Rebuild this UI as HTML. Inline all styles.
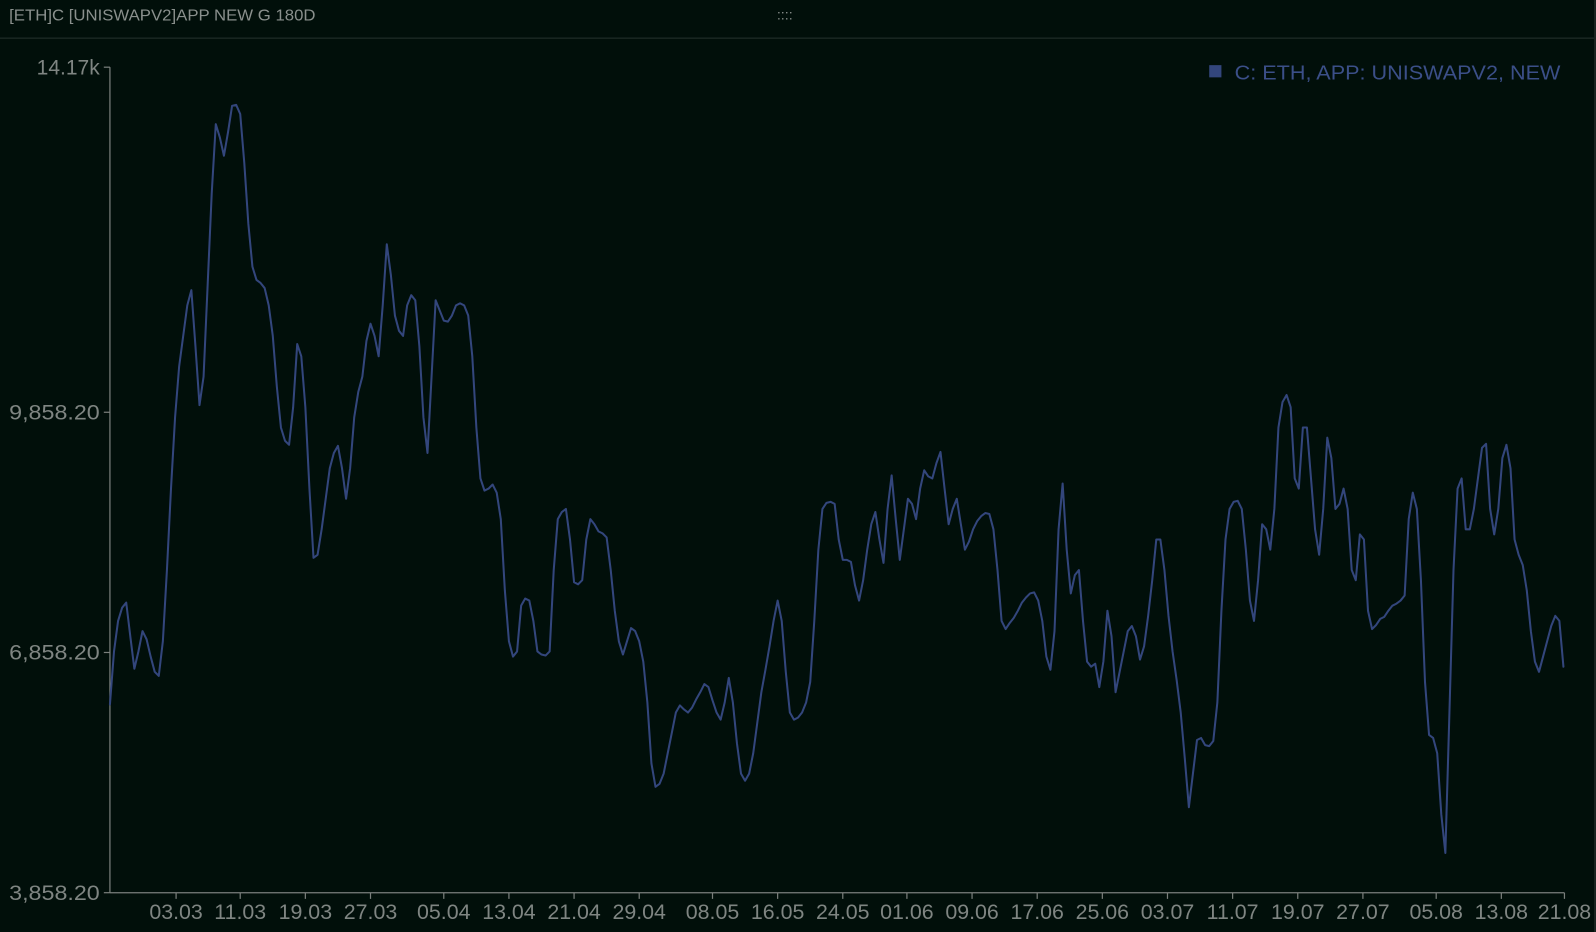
<!DOCTYPE html>
<html><head><meta charset="utf-8"><style>
html,body{margin:0;padding:0;background:#010f0a;width:1596px;height:932px;overflow:hidden}
svg{display:block}
text{font-family:"Liberation Sans",sans-serif}
</style></head><body>
<svg width="1596" height="932" viewBox="0 0 1568 915.6" preserveAspectRatio="none">
<rect x="0" y="0" width="1568" height="916" fill="#010f0a"/>
<line x1="0" y1="37.5" x2="1568" y2="37.5" stroke="#26332f" stroke-width="1"/>
<rect x="1566" y="0" width="2" height="916" fill="#1a2420"/>
<text x="9" y="20" font-size="15.5" fill="#8a908d" textLength="301" lengthAdjust="spacingAndGlyphs">[ETH]C [UNISWAPV2]APP NEW G 180D</text>
<text x="771" y="19" font-size="14" fill="#8a908d" text-anchor="middle">::::</text>
<g stroke="#7a7f7c" stroke-width="1.2" fill="none">
<line x1="108" y1="66" x2="108" y2="877"/>
<line x1="108" y1="877" x2="1537" y2="877"/>
<line x1="102" y1="66" x2="108" y2="66"/>
<line x1="102" y1="405" x2="108" y2="405"/>
<line x1="102" y1="641" x2="108" y2="641"/>
<line x1="102" y1="877" x2="108" y2="877"/>
<path d="M173 877v6M236 877v6M300 877v6M364 877v6M436 877v6M500 877v6M564 877v6M628 877v6M700 877v6M764 877v6M828 877v6M891 877v6M955 877v6M1019 877v6M1083 877v6M1147 877v6M1211 877v6M1275 877v6M1339 877v6M1411 877v6M1475 877v6M1537 877v6"/>
</g>
<g font-size="21" fill="#7f8582">
<text x="36" y="73" textLength="62" lengthAdjust="spacingAndGlyphs">14.17k</text>
<text x="9" y="412" textLength="89" lengthAdjust="spacingAndGlyphs">9,858.20</text>
<text x="9" y="648" textLength="89" lengthAdjust="spacingAndGlyphs">6,858.20</text>
<text x="9" y="884" textLength="89" lengthAdjust="spacingAndGlyphs">3,858.20</text>
</g>
<g font-size="21" fill="#7f8582" text-anchor="middle">
<text x="173" y="903">03.03</text><text x="236" y="903">11.03</text><text x="300" y="903">19.03</text><text x="364" y="903">27.03</text><text x="436" y="903">05.04</text><text x="500" y="903">13.04</text><text x="564" y="903">21.04</text><text x="628" y="903">29.04</text><text x="700" y="903">08.05</text><text x="764" y="903">16.05</text><text x="828" y="903">24.05</text><text x="891" y="903">01.06</text><text x="955" y="903">09.06</text><text x="1019" y="903">17.06</text><text x="1083" y="903">25.06</text><text x="1147" y="903">03.07</text><text x="1211" y="903">11.07</text><text x="1275" y="903">19.07</text><text x="1339" y="903">27.07</text><text x="1411" y="903">05.08</text><text x="1475" y="903">13.08</text><text x="1537" y="903">21.08</text>
</g>
<rect x="1188" y="64" width="12" height="12" fill="#33467c"/>
<text x="1213" y="78" font-size="20" fill="#3b4f88" textLength="320" lengthAdjust="spacingAndGlyphs">C: ETH, APP: UNISWAPV2, NEW</text>
<polyline fill="none" stroke="#33467c" stroke-width="2" stroke-linejoin="round" stroke-linecap="round" points="108,692 112,640 116,610 120,597 124,592 128,625 132,657 136,640 140,620 144,628 148,645 152,660 156,664 160,630 164,560 168,480 172,410 176,360 180,330 184,300 188,285 192,340 196,398 200,370 204,280 208,190 212,122 216,135 220,153 224,130 228,104 232,103 236,112 240,160 244,220 248,262 252,275 256,278 260,283 264,300 268,330 272,380 276,420 280,433 284,437 288,400 292,338 296,350 300,400 304,480 308,548 312,545 316,520 320,490 324,460 328,445 332,438 336,460 340,490 344,460 348,410 352,385 356,370 360,335 364,318 368,330 372,350 376,300 380,240 384,270 388,310 392,325 396,330 400,300 404,290 408,295 412,340 416,410 420,445 424,370 428,295 432,305 436,315 440,316 444,310 448,300 452,298 456,300 460,310 464,350 468,420 472,470 476,482 480,480 484,476 488,484 492,510 496,580 500,630 504,645 508,640 512,595 516,588 520,590 524,610 528,640 532,643 536,644 540,640 544,560 548,510 552,503 556,500 560,530 564,572 568,574 572,570 576,530 580,510 584,515 588,522 592,524 596,528 600,560 604,600 608,630 612,643 616,630 620,617 624,620 628,630 632,650 636,690 640,750 644,773 648,770 652,760 656,740 660,720 664,700 668,693 672,697 676,700 680,695 684,687 688,680 692,672 696,675 700,688 704,700 708,707 712,690 716,666 720,690 724,730 728,760 732,767 736,760 740,740 744,710 748,680 752,658 756,635 760,610 764,590 768,610 772,660 776,700 780,707 784,705 788,700 792,690 796,670 800,610 804,540 808,500 812,494 816,493 820,495 824,530 828,550 832,550 836,552 840,575 844,590 848,570 852,540 856,515 860,503 864,530 868,553 872,500 876,467 880,510 884,550 888,520 892,490 896,495 900,510 904,480 908,462 912,468 916,470 920,455 924,444 928,480 932,515 936,500 940,490 944,515 948,540 952,532 956,520 960,512 964,507 968,504 972,505 976,520 980,560 984,610 988,618 992,612 996,607 1000,600 1004,592 1008,587 1012,583 1016,582 1020,590 1024,610 1028,645 1032,658 1036,620 1040,520 1044,475 1048,540 1052,583 1056,565 1060,560 1064,610 1068,650 1072,655 1076,652 1080,675 1084,650 1088,600 1092,625 1096,680 1100,660 1104,640 1108,620 1112,615 1116,625 1120,648 1124,635 1128,605 1132,570 1136,530 1140,530 1144,560 1148,605 1152,640 1156,668 1160,700 1164,745 1168,793 1172,760 1176,727 1180,725 1184,732 1188,733 1192,728 1196,690 1200,600 1204,530 1208,500 1212,493 1216,492 1220,500 1224,540 1228,590 1232,610 1236,570 1240,515 1244,520 1248,540 1252,500 1256,420 1260,395 1264,388 1268,400 1272,470 1276,480 1280,420 1284,420 1288,470 1292,520 1296,545 1300,500 1304,430 1308,450 1312,500 1316,495 1320,480 1324,500 1328,560 1332,570 1336,525 1340,530 1344,600 1348,618 1352,614 1356,608 1360,606 1364,600 1368,595 1372,593 1376,590 1380,585 1384,510 1388,484 1392,500 1396,570 1400,670 1404,722 1408,725 1412,740 1416,800 1420,838 1424,700 1428,560 1432,480 1436,470 1440,520 1444,520 1448,500 1452,470 1456,440 1460,436 1464,500 1468,525 1472,500 1476,450 1480,437 1484,460 1488,530 1492,545 1496,555 1500,580 1504,620 1508,650 1512,660 1516,645 1520,630 1524,615 1528,605 1532,610 1536,655"/>
</svg>
</body></html>
